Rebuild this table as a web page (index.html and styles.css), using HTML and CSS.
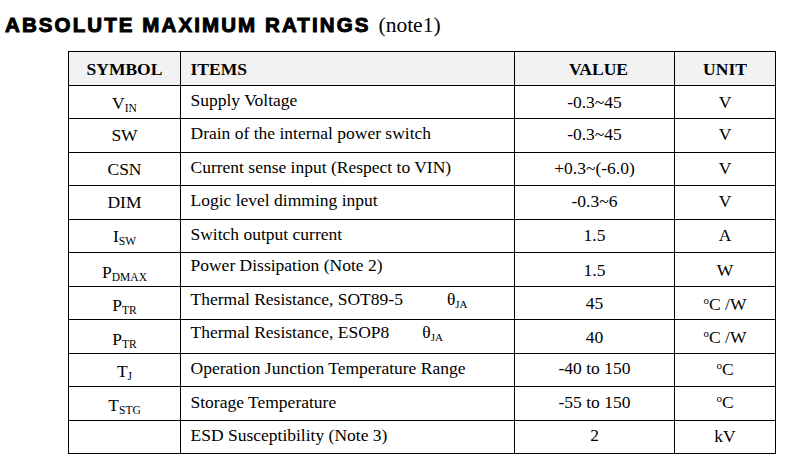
FILE: index.html
```html
<!DOCTYPE html>
<html>
<head>
<meta charset="utf-8">
<link rel="stylesheet" href="styles.css">
</head>
<body>
<div class="title"><span class="heavy">ABSOLUTE MAXIMUM RATINGS</span><span class="note">(note1)</span></div>
<table class="ratings">
  <colgroup>
    <col class="c-sym"><col class="c-item"><col class="c-val"><col class="c-unit">
  </colgroup>
  <tr class="head">
    <th class="sym">SYMBOL</th><th class="item">ITEMS</th><th class="val">VALUE</th><th class="unit">UNIT</th>
  </tr>
  <tr class="r1">
    <td class="sym">V<sub>IN</sub></td><td class="item">Supply Voltage</td><td class="val">-0.3~45</td><td class="unit">V</td>
  </tr>
  <tr>
    <td class="sym">SW</td><td class="item">Drain of the internal power switch</td><td class="val">-0.3~45</td><td class="unit">V</td>
  </tr>
  <tr>
    <td class="sym">CSN</td><td class="item">Current sense input (Respect to VIN)</td><td class="val">+0.3~(-6.0)</td><td class="unit">V</td>
  </tr>
  <tr>
    <td class="sym">DIM</td><td class="item">Logic level dimming input</td><td class="val">-0.3~6</td><td class="unit">V</td>
  </tr>
  <tr>
    <td class="sym">I<sub>SW</sub></td><td class="item">Switch output current</td><td class="val">1.5</td><td class="unit">A</td>
  </tr>
  <tr class="low">
    <td class="sym">P<sub>DMAX</sub></td><td class="item">Power Dissipation (Note 2)</td><td class="val">1.5</td><td class="unit">W</td>
  </tr>
  <tr class="low">
    <td class="sym">P<sub>TR</sub></td><td class="item">Thermal Resistance, SOT89-5<span class="theta t1">θ<sub>JA</sub></span></td><td class="val">45</td><td class="unit"><sup>o</sup>C /W</td>
  </tr>
  <tr class="low">
    <td class="sym">P<sub>TR</sub></td><td class="item">Thermal Resistance, ESOP8<span class="theta t2">θ<sub>JA</sub></span></td><td class="val">40</td><td class="unit"><sup>o</sup>C /W</td>
  </tr>
  <tr class="tail">
    <td class="sym">T<sub>J</sub></td><td class="item">Operation Junction Temperature Range</td><td class="val">-40 to 150</td><td class="unit"><sup>o</sup>C</td>
  </tr>
  <tr class="tail">
    <td class="sym">T<sub>STG</sub></td><td class="item">Storage Temperature</td><td class="val">-55 to 150</td><td class="unit"><sup>o</sup>C</td>
  </tr>
  <tr class="tail">
    <td class="sym"></td><td class="item">ESD Susceptibility (Note 3)</td><td class="val">2</td><td class="unit">kV</td>
  </tr>
</table>
</body>
</html>
```
FILE: styles.css
```css
html, body {
  margin: 0;
  padding: 0;
  background: #ffffff;
  color: #000000;
}

.title {
  padding: 12.5px 0 0 5px;
  height: 24px;
  line-height: 24px;
  white-space: nowrap;
}

.heavy {
  font-family: "Liberation Sans", Arial, sans-serif;
  font-weight: 700;
  font-size: 20.5px;
  letter-spacing: 2.1px;
  -webkit-text-stroke: 1px #000;
}

.note {
  font-family: "Liberation Serif", "Times New Roman", serif;
  font-size: 21.5px;
  margin-left: 8px;
}

.ratings {
  margin: 14.5px 0 0 68px;
  border-collapse: collapse;
  table-layout: fixed;
  width: 707px;
  font-family: "Liberation Serif", "Times New Roman", serif;
  font-size: 17.5px;
  line-height: 20px;
}

.c-sym { width: 112px; }
.c-item { width: 334px; }
.c-val { width: 160px; }
.c-unit { width: 101px; }

.ratings tr {
  height: 33.5px;
}

.ratings th,
.ratings td {
  border: 1px solid #000;
  padding: 0;
  vertical-align: top;
  white-space: nowrap;
}

.ratings th {
  background: #f2f2f2;
  font-weight: 700;
  padding-top: 7px;
}

.ratings .sym { text-align: center; padding-top: 6px; }
.ratings .item { text-align: left; padding-left: 9.5px; padding-top: 4.2px; }
.ratings .val { text-align: center; padding-top: 5.2px; }
.ratings .unit { text-align: center; padding-top: 5.4px; }

.ratings th.val { padding-left: 8px; }
.ratings tr.head th { padding-top: 7.2px; }

.ratings tr.r1 .sym { padding-top: 7.6px; }
.ratings tr.r1 .val,
.ratings tr.r1 .unit { padding-top: 6.2px; }

.ratings tr.low .sym { padding-top: 8.6px; }
.ratings tr.low .item { padding-top: 2.2px; }
.ratings tr.low .val { padding-top: 6.6px; }
.ratings tr.low .unit { padding-top: 7px; }

.ratings tr.tail .sym { padding-top: 7.8px; }
.ratings tr.tail .item { padding-top: 4.9px; }
.ratings tr.tail .val { padding-top: 4.8px; }
.ratings tr.tail .unit { padding-top: 5.4px; }

sub {
  font-size: 11.5px;
  vertical-align: -3px;
  line-height: 0;
}

sup {
  font-size: 11px;
  vertical-align: 6px;
  line-height: 0;
}

.theta sub {
  font-size: 11px;
}

.t1 { margin-left: 44px; }
.t2 { margin-left: 33px; }
```
